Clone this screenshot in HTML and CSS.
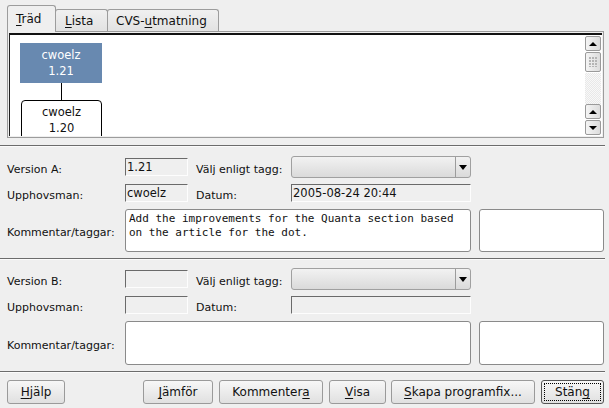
FILE: index.html
```html
<!DOCTYPE html>
<html>
<head>
<meta charset="utf-8">
<link rel="stylesheet" href="styles.css">
</head>
<body>
<div class="dialog">
  <div class="tabs">
    <div class="tab active"><u>T</u>räd</div>
    <div class="tab"><u>L</u>ista</div>
    <div class="tab">CVS-<u>u</u>tmatning</div>
  </div>
  <div class="panel">
    <div class="view">
      <div class="tree">
        <div class="node current">cwoelz<br>1.21</div>
        <div class="link"></div>
        <div class="node">cwoelz<br>1.20</div>
      </div>
      <div class="scrollbar">
        <div class="sb-btn"><span class="arr-up"></span></div>
        <div class="sb-slider"></div>
        <div class="sb-trough"></div>
        <div class="sb-btn"><span class="arr-up"></span></div>
        <div class="sb-btn"><span class="arr-down"></span></div>
      </div>
    </div>
  </div>

  <div class="sep"></div>

  <div class="form">
    <div class="label">Version A:</div>
    <div class="field">1.21</div>
    <div class="label">Välj enligt tagg:</div>
    <div class="combo"><span class="combo-main"></span><span class="combo-arrow"><span class="arr-down"></span></span></div>
    <div></div>

    <div class="label">Upphovsman:</div>
    <div class="field">cwoelz</div>
    <div class="label">Datum:</div>
    <div class="field">2005-08-24 20:44</div>
    <div></div>

    <div class="label">Kommentar/taggar:</div>
    <div class="textarea wide">Add the improvements for the Quanta section based<br>on the article for the dot.</div>
    <div class="textarea"></div>
  </div>

  <div class="sep"></div>

  <div class="form formb">
    <div class="label">Version B:</div>
    <div class="field"></div>
    <div class="label">Välj enligt tagg:</div>
    <div class="combo"><span class="combo-main"></span><span class="combo-arrow"><span class="arr-down"></span></span></div>
    <div></div>

    <div class="label">Upphovsman:</div>
    <div class="field"></div>
    <div class="label">Datum:</div>
    <div class="field"></div>
    <div></div>

    <div class="label">Kommentar/taggar:</div>
    <div class="textarea wide"></div>
    <div class="textarea"></div>
  </div>

  <div class="sep"></div>

  <div class="buttons">
    <div class="btn w-hjalp"><u>H</u>jälp</div>
    <div class="spacer"></div>
    <div class="btn w-jamfor"><u>J</u>ämför</div>
    <div class="btn w-komm">Kommenter<u>a</u></div>
    <div class="btn w-visa"><u>V</u>isa</div>
    <div class="btn w-skapa"><u>S</u>kapa programfix...</div>
    <div class="btn default w-stang"><span class="focus">Stän<u>g</u></span></div>
  </div>
</div>
</body>
</html>
```

FILE: styles.css
```css
html, body {
  margin: 0;
  padding: 0;
  background: #efefef;
}
body {
  font-family: "DejaVu Sans", sans-serif;
  font-size: 11px;
  color: #111;
  width: 609px;
  height: 408px;
  overflow: hidden;
}
u { text-decoration: underline; text-underline-offset: 2px; }

.dialog {
  padding: 5px 0 0 0;
}

/* Tabs */
.tabs {
  display: flex;
  align-items: flex-end;
  padding-left: 7px;
  height: 26px;
  position: relative;
  z-index: 2;
}
.tab {
  height: 22px;
  line-height: 22px;
  border: 1px solid #9c9c9c;
  border-bottom: none;
  border-radius: 3px 3px 0 0;
  background: linear-gradient(#f0f0f0, #e2e2e2);
  padding: 0 8px;
  font-size: 12px;
  margin-left: -1px;
  box-sizing: border-box;
}
.tab:first-child { margin-left: 0; }
.tab.active {
  height: 27px;
  line-height: 26px;
  background: #efefef;
  margin-bottom: -1px;
  position: relative;
  z-index: 3;
  width: 49px;
}
.tab:nth-child(2) { width: 53px; padding-left: 9px; }
.tab:nth-child(3) { width: 112px; }

/* Panel with graph view */
.panel {
  margin-left: 7px;
  width: 597px;
  height: 107px;
  box-sizing: border-box;
  border: 1px solid #9c9c9c;
  padding: 1px;
}
.view {
  display: flex;
  height: 100%;
  box-sizing: border-box;
  border-top: 2px solid #111;
  border-left: 1px solid #222;
  background: #fff;
  overflow: hidden;
}
.tree {
  flex: 1;
  display: flex;
  flex-direction: column;
  align-items: flex-start;
  padding: 8px 0 0 10px;
  overflow: hidden;
}
.node {
  width: 82px;
  height: 40px;
  box-sizing: border-box;
  text-align: center;
  line-height: 16px;
  padding-top: 4px;
  font-size: 11.5px;
  flex-shrink: 0;
}
.node.current {
  background: #6889b0;
  color: #fff;
}
.node:not(.current) {
  border: 1px solid #000;
  border-radius: 4px;
  width: 81px;
  margin-left: 1px;
  padding-top: 3px;
}
.link {
  width: 1px;
  height: 17px;
  background: #000;
  margin-left: 41px;
  flex-shrink: 0;
}

.scrollbar {
  width: 16px;
  display: flex;
  flex-direction: column;
  padding-top: 1px;
  margin-right: 1px;
}
.sb-btn, .sb-slider {
  height: 15px;
  box-sizing: border-box;
  border: 1px solid #9a9a9a;
  border-radius: 2px;
  background: linear-gradient(90deg, #f4f4f4, #dcdcdc);
  display: flex;
  align-items: center;
  justify-content: center;
  margin-bottom: 1px;
}
.sb-slider {
  height: 20px;
  background-image:
    radial-gradient(circle at 1px 1px, #b4b4b4 0.8px, transparent 1px),
    linear-gradient(90deg, #f4f4f4, #dcdcdc);
  background-size: 3px 3px, 100% 100%;
  background-position: 3px 4px, 0 0;
  background-repeat: repeat, no-repeat;
  background-clip: content-box, border-box;
  padding: 4px 3px;
}
.sb-trough {
  flex: 1;
  background:
    repeating-conic-gradient(#e8e8e8 0 25%, #f8f8f8 0 50%) 0 0 / 2px 2px;
}
.arr-up, .arr-down {
  display: block;
  width: 0;
  height: 0;
  border-left: 4px solid transparent;
  border-right: 4px solid transparent;
}
.arr-up { border-bottom: 4px solid #000; }
.arr-down { border-top: 4px solid #000; }

/* separators */
.sep {
  margin: 7px 4px 0 0;
  border-top: 1px solid #6c6c6c;
  border-bottom: 1px solid #fbfbfb;
}

/* form */
.form {
  display: grid;
  grid-template-columns: 110px 63px 87px 180px 125px;
  grid-template-rows: 22px 18px 43px;
  column-gap: 8px;
  row-gap: 6px;
  padding: 9px 0 0 7px;
  align-items: center;
}
.form > :nth-child(n+11) { margin-top: 1px; }
.formb { grid-template-rows: 22px 18px 44px; padding-top: 8px; }
.label {
  white-space: nowrap;
  padding-top: 5px;
}
.field {
  height: 18px;
  box-sizing: border-box;
  border-top: 1px solid #6a6a6a;
  border-left: 1px solid #6a6a6a;
  border-right: 1px solid #fdfdfd;
  border-bottom: 1px solid #fdfdfd;
  padding-left: 1px;
  line-height: 16px;
  font-size: 11.5px;
  white-space: nowrap;
  overflow: hidden;
}
.combo {
  height: 22px;
  box-sizing: border-box;
  border: 1px solid #a0a0a0;
  border-radius: 3px;
  background: linear-gradient(#f2f2f2, #dadada);
  display: flex;
}
.combo-main { flex: 1; border-right: 1px solid #9c9c9c; }
.combo-arrow {
  width: 14px;
  display: flex;
  align-items: center;
  justify-content: center;
}
.combo-arrow .arr-down {
  border-left-width: 4px;
  border-right-width: 4px;
  border-top-width: 5px;
}
.textarea {
  height: 100%;
  box-sizing: border-box;
  border: 1px solid #8a8a8a;
  border-radius: 3px;
  background: #fff;
  font-family: "DejaVu Sans Mono", monospace;
  font-size: 11px;
  line-height: 14px;
  padding: 2px 3px;
  white-space: nowrap;
  overflow: hidden;
}
.textarea.wide { grid-column: 2 / 5; }

/* buttons */
.buttons {
  display: flex;
  padding: 7px 0 0 7px;
  gap: 6px;
}
.spacer { flex: 0 0 66px; }
.btn {
  height: 24px;
  box-sizing: border-box;
  border: 1px solid #9a9a9a;
  border-radius: 3px;
  background: linear-gradient(#f7f7f7, #e0e0e0);
  display: flex;
  align-items: center;
  justify-content: center;
  font-size: 12px;
  white-space: nowrap;
}
.w-hjalp { width: 58px; }
.w-jamfor { width: 70px; }
.w-komm { width: 104px; }
.w-visa { width: 57px; margin-right: -1px; }
.w-skapa { width: 144px; }
.w-stang { width: 63px; }
.btn.default {
  border: 1px solid #555;
  padding: 2px;
}
.focus {
  flex: 1;
  align-self: stretch;
  display: flex;
  align-items: center;
  justify-content: center;
  border: 1px dotted #000;
}
```
